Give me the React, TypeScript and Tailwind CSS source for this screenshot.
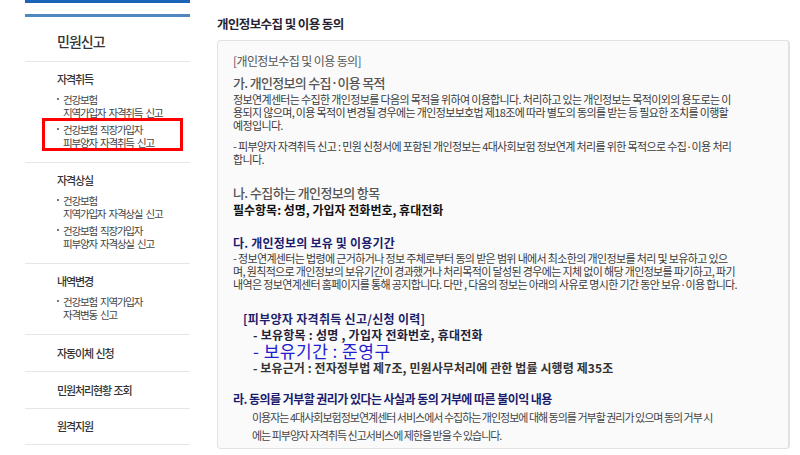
import React from "react"

type Section = {
  title: string
  items: [string, string][]
  highlight?: number
}

const sections: Section[] = [
  {
    title: "자격취득",
    items: [
      ["건강보험", "지역가입자 자격취득 신고"],
      ["건강보험 직장가입자", "피부양자 자격취득 신고"],
    ],
    highlight: 1,
  },
  {
    title: "자격상실",
    items: [
      ["건강보험", "지역가입자 자격상실 신고"],
      ["건강보험 직장가입자", "피부양자 자격상실 신고"],
    ],
  },
  {
    title: "내역변경",
    items: [["건강보험 지역가입자", "자격변동 신고"]],
  },
]

const links = ["자동이체 신청", "민원처리현황 조회", "원격지원"]

function Sidebar() {
  return (
    <aside className="ml-[25px] flex w-[165px] flex-col">
      <div className="h-[3px] bg-[#1a64b8]" />
      <div className="mt-[11px] h-[3px] bg-[#4f88be]" />
      <div className="border-b border-[#e6e6e6] pb-[10px] pl-[32px] pt-[14px]">
        <h2 className="text-[14px] leading-[20px] font-medium tracking-[-1px] text-[#333]">민원신고</h2>
      </div>

      {sections.map((s) => (
        <div key={s.title} className="border-b border-[#e6e6e6] pb-[13px] pl-[32px] pt-[9px]">
          <h3 className="text-[11px] leading-4 font-medium tracking-[-1.1px] text-[#333]">{s.title}</h3>
          <ul className="mt-[6px] flex flex-col gap-[4px]">
            {s.items.map((it, i) => (
              <li
                key={i}
                className="relative flex text-[10.5px] leading-[13px] tracking-[-1.2px] text-[#444] [word-spacing:2px]"
              >
                <span className="mr-[4px] mt-[5px] h-[2px] w-[2px] shrink-0 bg-[#777]" />
                <span>
                  {it[0]}
                  <br />
                  {it[1]}
                </span>
                {s.highlight === i && (
                  <span className="absolute left-[-15px] top-[-5px] h-[33px] w-[141px] border-[3px] border-[#ff0000]" />
                )}
              </li>
            ))}
          </ul>
        </div>
      ))}

      {links.map((l, i) => (
        <div
          key={l}
          className={`flex items-center border-b border-[#e6e6e6] pl-[32px] ${i === links.length - 1 ? "h-[36px]" : "h-[37px]"}`}
        >
          <span className="text-[11px] font-medium tracking-[-1.1px] text-[#333] [word-spacing:1px]">{l}</span>
        </div>
      ))}
    </aside>
  )
}

function Lines({ lines, className }: { lines: string[]; className?: string }) {
  return (
    <div className={className}>
      {lines.map((l, i) => (
        <p key={i} className="whitespace-nowrap">
          {l}
        </p>
      ))}
    </div>
  )
}

function Consent() {
  return (
    <section className="ml-[27px] flex w-[573px] flex-col pt-[16px]">
      <h1 className="text-[12.5px] leading-4 font-bold tracking-[-0.6px] text-[#262230]">개인정보수집 및 이용 동의</h1>

      <div className="mt-[8px] flex flex-col rounded-[4px] border border-r-[2px] border-[#e2e2e2] bg-[#fafafa] pb-[4px] pl-[15px] pt-[12px]">
        <p className="text-[12px] leading-4 tracking-[-0.6px] text-[#555]">[개인정보수집 및 이용 동의]</p>

        <p className="mt-[6px] text-[13px] leading-4 font-medium tracking-[-0.7px] text-[#555]">가. 개인정보의 수집·이용 목적</p>
        <Lines
          className="mt-[2px] text-[11px] leading-[13px] tracking-[-0.65px] text-[#3a3a3a]"
          lines={[
            "정보연계센터는 수집한 개인정보를 다음의 목적을 위하여 이용합니다. 처리하고 있는 개인정보는 목적이외의 용도로는 이",
            "용되지 않으며, 이용 목적이 변경될 경우에는 개인정보보호법 제18조에 따라 별도의 동의를 받는 등 필요한 조치를 이행할",
            "예정입니다.",
          ]}
        />
        <Lines
          className="mt-[8px] text-[11px] leading-[13px] tracking-[-0.65px] text-[#3a3a3a]"
          lines={[
            "- 피부양자 자격취득 신고 : 민원 신청서에 포함된 개인정보는 4대사회보험 정보연계 처리를 위한 목적으로 수집·이용 처리",
            "합니다.",
          ]}
        />

        <p className="mt-[19px] text-[13px] leading-4 font-medium tracking-[-0.6px] text-[#555]">나. 수집하는 개인정보의 항목</p>
        <p className="mt-[1px] text-[12px] leading-4 font-bold tracking-[0px] text-[#111]">필수항목: 성명, 가입자 전화번호, 휴대전화</p>

        <p className="mt-[17px] text-[12px] leading-4 font-bold tracking-[0.2px] text-[#1c1c6e]">다. 개인정보의 보유 및 이용기간</p>
        <Lines
          className="mt-[1px] text-[11px] leading-[13px] tracking-[-0.65px] text-[#3a3a3a]"
          lines={[
            "- 정보연계센터는 법령에 근거하거나 정보 주체로부터 동의 받은 범위 내에서 최소한의 개인정보를 처리 및 보유하고 있으",
            "며, 원칙적으로 개인정보의 보유기간이 경과했거나 처리목적이 달성된 경우에는 지체 없이 해당 개인정보를 파기하고, 파기",
            "내역은 정보연계센터 홈페이지를 통해 공지합니다. 다만 , 다음의 정보는 아래의 사유로 명시한 기간 동안 보유·이용 합니다.",
          ]}
        />

        <div className="mt-[20px] ml-[10px] flex flex-col">
          <p className="text-[12px] leading-4 font-bold tracking-[0.3px] text-[#1b1f6b]">[피부양자 자격취득 신고/신청 이력]</p>
          <div className="ml-[10px] flex flex-col">
            <p className="text-[12px] leading-[15px] font-bold tracking-[0.25px] text-[#22223a]">- 보유항목 : 성명 , 가입자 전화번호, 휴대전화</p>
            <p className="text-[17px] leading-[18px] tracking-[0.5px] text-[#2020d0]">- 보유기간 : 준영구</p>
            <p className="text-[12px] leading-[15px] font-bold tracking-[0.1px] text-[#333]">
              - 보유근거 : 전자정부법 제7조, 민원사무처리에 관한 법률 시행령 제35조
            </p>
          </div>
        </div>

        <p className="mt-[16px] text-[12px] leading-4 font-bold tracking-[-0.55px] text-[#1c1c6e]">
          라. 동의를 거부할 권리가 있다는 사실과 동의 거부에 따른 불이익 내용
        </p>
        <Lines
          className="ml-[19px] mt-[1px] text-[11px] leading-[18px] tracking-[-1px] text-[#444]"
          lines={[
            "이용자는 4대사회보험정보연계센터 서비스에서 수집하는 개인정보에 대해 동의를 거부할 권리가 있으며 동의 거부 시",
            "에는 피부양자 자격취득 신고서비스에 제한을 받을 수 있습니다.",
          ]}
        />
      </div>
    </section>
  )
}

export default function App() {
  return (
    <div className="flex h-[455px] w-[800px] overflow-hidden bg-white font-['Noto_Sans_CJK_KR',sans-serif]">
      <Sidebar />
      <Consent />
    </div>
  )
}
